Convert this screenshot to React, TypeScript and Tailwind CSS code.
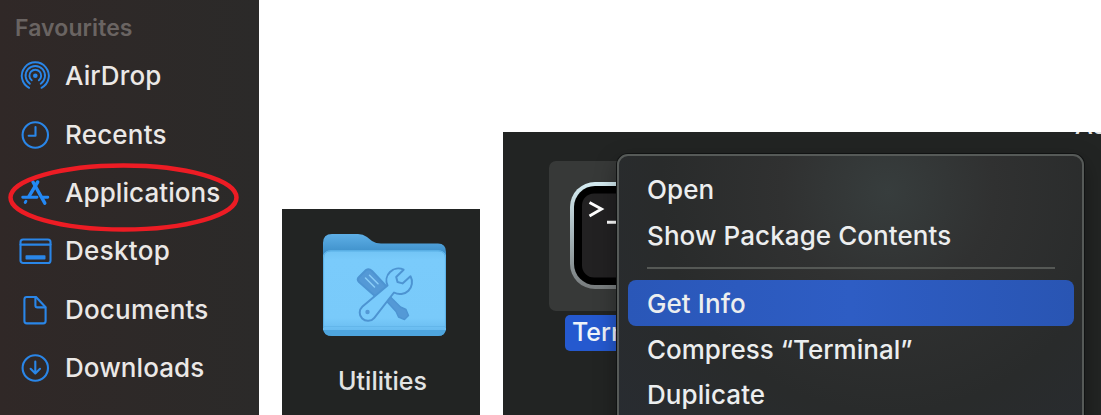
import type { ReactNode } from "react";

const iconProps = {
  width: 34,
  height: 34,
  viewBox: "0 0 34 34",
  fill: "none",
  stroke: "#2a86e8",
  strokeWidth: 2.1,
  strokeLinecap: "round" as const,
  strokeLinejoin: "round" as const,
  className: "shrink-0",
};

function AirDropIcon() {
  return (
    <svg {...iconProps} strokeWidth={1.9}>
      <circle cx="17.300" cy="16.700" r="2.300" fill="#2a86e8" stroke="none" />
      <path d="M13.700 21.300A5.900 5.900 0 1 1 20.900 21.300" />
      <path d="M11.900 24.700A9.700 9.700 0 1 1 22.700 24.700" />
      <path d="M11.100 28.800A13.500 13.500 0 1 1 23.500 28.800" />
    </svg>
  );
}

function RecentsIcon() {
  return (
    <svg {...iconProps}>
      <circle cx="17.300" cy="17" r="12.700" />
      <path d="M17.500 9v8.700h-6.800" />
    </svg>
  );
}

function ApplicationsIcon() {
  return (
    <svg {...iconProps} stroke="#2489f5" strokeWidth={3.4}>
      <path d="M19.700 6L11 20.300" />
      <path d="M15 6L26.800 27.200" />
      <path d="M4.700 21.300H19M25 21.300H29.800" strokeWidth={2.9} />
      <path d="M7.900 25.300L7.200 26.500" strokeWidth={2.9} />
    </svg>
  );
}

function DesktopIcon() {
  return (
    <svg {...iconProps}>
      <rect x="2.500" y="5.500" width="30" height="23.500" rx="2.600" />
      <path d="M2.500 10.600H32.500" />
      <rect x="7.500" y="21.300" width="20" height="4.200" rx="0.800" fill="#2a86e8" stroke="none" />
    </svg>
  );
}

function DocumentsIcon() {
  return (
    <svg {...iconProps}>
      <path d="M18 4H8.800A2.400 2.400 0 0 0 6.400 6.400V28A2.400 2.400 0 0 0 8.800 30.400H25.200A2.400 2.400 0 0 0 27.600 28V14.200Z" />
      <path d="M17.400 4.200V12.400A2 2 0 0 0 19.400 14.400H27.200" />
    </svg>
  );
}

function DownloadsIcon() {
  return (
    <svg {...iconProps}>
      <circle cx="17.300" cy="17" r="12.700" />
      <path d="M17.300 10.500V22.300M12.600 17.800L17.300 22.500L22 17.800" />
    </svg>
  );
}

const favourites: { label: string; icon: ReactNode; tracking: string }[] = [
  { label: "AirDrop", icon: <AirDropIcon />, tracking: "tracking-[0.100px]" },
  { label: "Recents", icon: <RecentsIcon />, tracking: "tracking-[0.200px]" },
  { label: "Applications", icon: <ApplicationsIcon />, tracking: "tracking-[0.080px]" },
  { label: "Desktop", icon: <DesktopIcon />, tracking: "tracking-[0.300px]" },
  { label: "Documents", icon: <DocumentsIcon />, tracking: "tracking-[0.200px]" },
  { label: "Downloads", icon: <DownloadsIcon />, tracking: "tracking-[0.080px]" },
];

function Sidebar() {
  return (
    <aside className="relative h-[415px] w-[259px] shrink-0 bg-linear-to-r from-[#302827] to-[#2b2a29] pt-[14px]">
      <h2 className="pl-[15px] text-[23px] leading-[28px] font-semibold tracking-[0.100px] text-[#6a6462]">Favourites</h2>
      <ul className="mt-[5px]">
        {favourites.map((item) => (
          <li key={item.label} className="flex h-[58.400px] items-center gap-[13px] pl-[18px]">
            {item.icon}
            <span className={`text-[26px] leading-none font-medium text-[#ebe8e6] ${item.tracking}`}>{item.label}</span>
          </li>
        ))}
      </ul>
      <svg className="absolute top-[160px] left-[6px]" width="236" height="76" viewBox="0 0 236 76" fill="none">
        <ellipse cx="117.500" cy="37.500" rx="113" ry="32" stroke="#ed1c24" strokeWidth="4.500" />
      </svg>
    </aside>
  );
}

function FolderIcon() {
  return (
    <svg width="128" height="108" viewBox="0 0 128 108" fill="none">
      <defs>
        <linearGradient id="folderBack" x1="0" y1="0" x2="0" y2="1">
          <stop offset="0" stopColor="#5eafe6" />
          <stop offset="0.180" stopColor="#3f91cb" />
          <stop offset="1" stopColor="#3f91cb" />
        </linearGradient>
        <linearGradient id="folderFront" x1="0" y1="0" x2="0" y2="1">
          <stop offset="0" stopColor="#72c4f5" />
          <stop offset="0.120" stopColor="#7acbfb" />
          <stop offset="0.850" stopColor="#79cafa" />
          <stop offset="1" stopColor="#69bcf0" />
        </linearGradient>
      </defs>
      <path d="M2 12Q2 3 11 3H37Q42 3 46 6L51 10Q55 12.500 60 12.500H117Q125 12.500 125 21V96Q125 105 117 105H11Q2 105 2 96Z" fill="url(#folderBack)" />
      <path d="M2 27Q2 19.500 10 19.500H117Q125 19.500 125 27V96Q125 105 117 105H11Q2 105 2 96Z" fill="#4ea5de" />
      <path d="M2 27Q2 19.500 10 19.500H117Q125 19.500 125 27V99H2Z" fill="url(#folderFront)" />
      <path d="M3 95.500H124" stroke="#63b6ea" />
      <path d="M2.600 97V27Q2.600 20 10 20H117Q124.400 20 124.400 27V97" stroke="#59afe5" />
      <g stroke="#4d94d2" fill="#5499d6" strokeLinejoin="round">
        <path d="M38 46L45 39Q48 37 51 40L66 56L55 66L38 51Q35.500 48.500 38 46Z" strokeWidth="2" />
        <path d="M44.500 47L53.500 56M48.500 44.300L57 52.800" stroke="#8acdf7" strokeWidth="1.500" strokeLinecap="round" />
        <path d="M64.500 69L68.500 65L79.500 76L85 78.500L87.500 84.500L83.500 88.500L77.500 86L75 80.500Z" strokeWidth="1.400" />
        <path d="M82.600 38.700A12 12 0 0 0 66.500 54.500L41.500 75.500A8.200 8.200 0 1 0 53.300 86.800L73 61.500A12 12 0 0 0 89.500 45.300L81.500 52.400L76.500 51L75.200 46Z" fill="#7acbfb" strokeWidth="2" />
        <circle cx="46.500" cy="81" r="2.200" stroke="none" />
      </g>
    </svg>
  );
}

function UtilitiesTile() {
  return (
    <section className="flex h-[206px] w-[198px] shrink-0 flex-col items-center bg-[#222423] pt-[22px] pl-[7px]">
      <FolderIcon />
      <span className="mt-[28px] -ml-[4px] text-[25px] leading-[28px] font-medium text-[#e2e4e3]">Utilities</span>
    </section>
  );
}

function TerminalIcon() {
  return (
    <svg width="112" height="112" viewBox="0 0 112 112" fill="none">
      <defs>
        <linearGradient id="bezel" x1="0" y1="0" x2="0" y2="1">
          <stop offset="0" stopColor="#d6edf3" />
          <stop offset="0.450" stopColor="#a9b9be" />
          <stop offset="1" stopColor="#777b7c" />
        </linearGradient>
      </defs>
      <rect x="1" y="1" width="108" height="107" rx="25" fill="url(#bezel)" />
      <rect x="5" y="5" width="100" height="99" rx="21" fill="#000" />
      <rect x="13" y="12.500" width="84" height="84" rx="12" fill="#222122" />
      <path d="M20.500 21.500L32.500 28L20.500 35M38 41.300H52" stroke="#fff" strokeWidth="2.900" />
    </svg>
  );
}

function ContextMenu() {
  return (
    <div className="absolute top-[22px] left-[114px] h-[300px] w-[467px] rounded-[11px] border-2 border-[#565a58] bg-[radial-gradient(ellipse_at_58%_12%,#373d3d_0%,#303131_28%,#292b2b_60%,#282c32_100%)] px-[9px] pt-[11px] text-[26px] font-medium tracking-[0.080px] text-[#eceeef] shadow-[0_0_0_1px_#111313,0_8px_22px_rgba(0,0,0,0.350)]">
      <div className="flex h-[45.700px] items-center pl-[19px]"><span className="leading-none">Open</span></div>
      <div className="flex h-[45.700px] items-center pl-[19px]"><span className="leading-none whitespace-nowrap">Show Package Contents</span></div>
      <div className="mt-[9px] mr-[18px] ml-[19px] h-[2px] bg-[#555855]" />
      <div className="mt-[11px] mr-[-1px] flex h-[46px] items-center rounded-[8px] bg-linear-to-r from-[#2a57b8] via-[#2e5dc4] to-[#2955b3] pt-px pl-[19px]"><span className="leading-none">Get Info</span></div>
      <div className="flex h-[45.700px] items-center pt-px pl-[19px]"><span className="leading-none tracking-[0px] whitespace-nowrap">Compress “Terminal”</span></div>
      <div className="flex h-[45.700px] items-center pt-px pl-[19px]"><span className="leading-none">Duplicate</span></div>
    </div>
  );
}

function TerminalWindow() {
  return (
    <section className="relative h-[283px] w-[598px] shrink-0 overflow-hidden bg-[#222423] pt-[29px] pl-[46px]">
      <div className="h-[150px] w-[150px] rounded-[7px] bg-[#373938] pt-[20px] pl-[20px]">
        <TerminalIcon />
      </div>
      <div className="mt-[4px] ml-[16px] flex h-[36px] w-[118px] items-center rounded-[5px] bg-[#2559cf] pl-[7px] text-[25px] font-medium text-[#f0f4fa]">Terminal</div>
      <span className="absolute -top-[22px] left-[572px] text-[25px] leading-[30px] font-medium text-[#e4e4e4]">As</span>
      <ContextMenu />
    </section>
  );
}

export default function App() {
  return (
    <main className="flex h-[415px] w-[1101px] items-end gap-[23px] overflow-hidden bg-white font-['Inter',sans-serif]">
      <Sidebar />
      <UtilitiesTile />
      <TerminalWindow />
    </main>
  );
}
